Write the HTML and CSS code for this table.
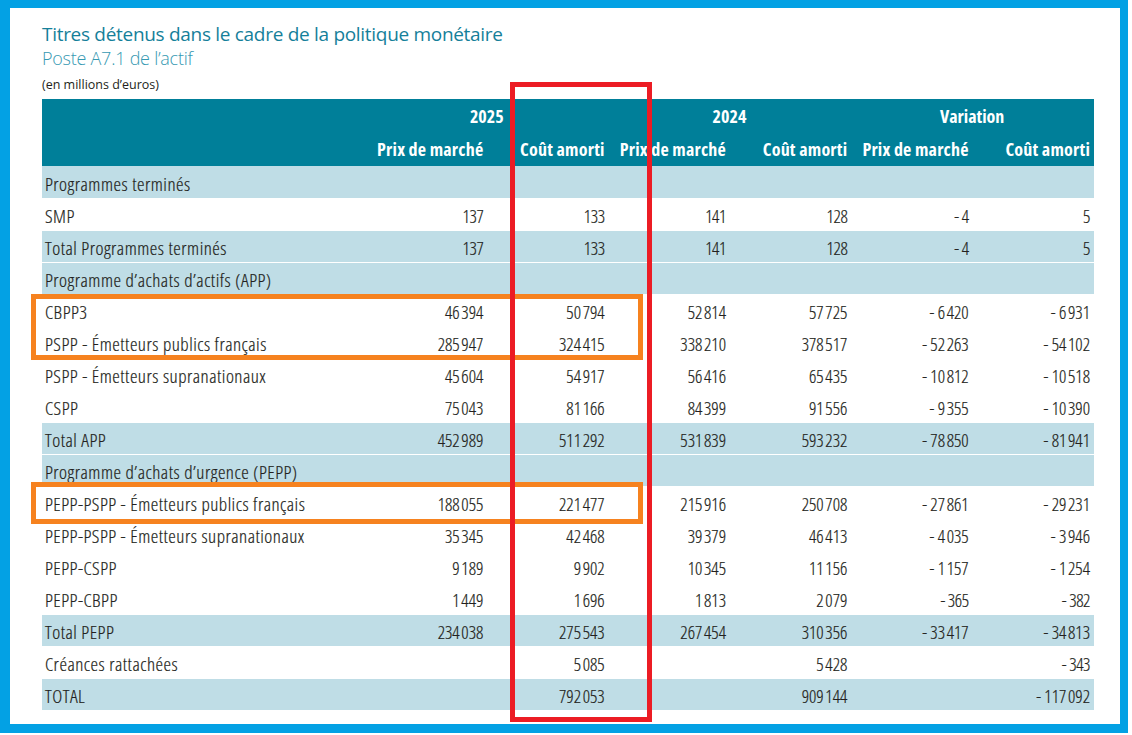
FILE: index.html
```html
<!DOCTYPE html>
<html lang="fr">
<head>
<meta charset="utf-8">
<title>Titres détenus dans le cadre de la politique monétaire</title>
<link rel="stylesheet" href="styles.css">
</head>
<body>
<div class="frame">
  <h1 class="title">Titres détenus dans le cadre de la politique monétaire</h1>
  <h2 class="subtitle">Poste A7.1 de l’actif</h2>
  <p class="unit">(en millions d’euros)</p>
  <table class="data">
    <colgroup>
      <col class="c-label"><col><col><col><col><col><col>
    </colgroup>
    <thead>
      <tr class="years">
        <th></th>
        <th colspan="2">2025</th>
        <th colspan="2">2024</th>
        <th colspan="2">Variation</th>
      </tr>
      <tr class="labels">
        <th></th>
        <th>Prix de marché</th>
        <th>Coût amorti</th>
        <th>Prix de marché</th>
        <th>Coût amorti</th>
        <th>Prix de marché</th>
        <th>Coût amorti</th>
      </tr>
    </thead>
    <tbody>
      <tr class="band"><td colspan="7">Programmes terminés</td></tr>
      <tr><td>SMP</td><td>137</td><td>133</td><td>141</td><td>128</td><td>- 4</td><td>5</td></tr>
      <tr class="band"><td>Total Programmes terminés</td><td>137</td><td>133</td><td>141</td><td>128</td><td>- 4</td><td>5</td></tr>
      <tr class="band"><td colspan="7">Programme d’achats d’actifs (APP)</td></tr>
      <tr><td>CBPP3</td><td>46&#8239;394</td><td>50&#8239;794</td><td>52&#8239;814</td><td>57&#8239;725</td><td>- 6&#8239;420</td><td>- 6&#8239;931</td></tr>
      <tr><td>PSPP - Émetteurs publics français</td><td>285&#8239;947</td><td>324&#8239;415</td><td>338&#8239;210</td><td>378&#8239;517</td><td>- 52&#8239;263</td><td>- 54&#8239;102</td></tr>
      <tr><td>PSPP - Émetteurs supranationaux</td><td>45&#8239;604</td><td>54&#8239;917</td><td>56&#8239;416</td><td>65&#8239;435</td><td>- 10&#8239;812</td><td>- 10&#8239;518</td></tr>
      <tr><td>CSPP</td><td>75&#8239;043</td><td>81&#8239;166</td><td>84&#8239;399</td><td>91&#8239;556</td><td>- 9&#8239;355</td><td>- 10&#8239;390</td></tr>
      <tr class="band"><td>Total APP</td><td>452&#8239;989</td><td>511&#8239;292</td><td>531&#8239;839</td><td>593&#8239;232</td><td>- 78&#8239;850</td><td>- 81&#8239;941</td></tr>
      <tr class="band"><td colspan="7">Programme d’achats d’urgence (PEPP)</td></tr>
      <tr><td>PEPP-PSPP - Émetteurs publics français</td><td>188&#8239;055</td><td>221&#8239;477</td><td>215&#8239;916</td><td>250&#8239;708</td><td>- 27&#8239;861</td><td>- 29&#8239;231</td></tr>
      <tr><td>PEPP-PSPP - Émetteurs supranationaux</td><td>35&#8239;345</td><td>42&#8239;468</td><td>39&#8239;379</td><td>46&#8239;413</td><td>- 4&#8239;035</td><td>- 3&#8239;946</td></tr>
      <tr><td>PEPP-CSPP</td><td>9&#8239;189</td><td>9&#8239;902</td><td>10&#8239;345</td><td>11&#8239;156</td><td>- 1&#8239;157</td><td>- 1&#8239;254</td></tr>
      <tr><td>PEPP-CBPP</td><td>1&#8239;449</td><td>1&#8239;696</td><td>1&#8239;813</td><td>2&#8239;079</td><td>- 365</td><td>- 382</td></tr>
      <tr class="band"><td>Total PEPP</td><td>234&#8239;038</td><td>275&#8239;543</td><td>267&#8239;454</td><td>310&#8239;356</td><td>- 33&#8239;417</td><td>- 34&#8239;813</td></tr>
      <tr><td>Créances rattachées</td><td></td><td>5&#8239;085</td><td></td><td>5&#8239;428</td><td></td><td>- 343</td></tr>
      <tr class="band"><td>TOTAL</td><td></td><td>792&#8239;053</td><td></td><td>909&#8239;144</td><td></td><td>- 117&#8239;092</td></tr>
    </tbody>
  </table>
</div>
<div class="mark mark-orange mark-o1"></div>
<div class="mark mark-orange mark-o2"></div>
<div class="mark mark-red"></div>
</body>
</html>
```
FILE: styles.css
```css
html, body {
  margin: 0;
  padding: 0;
  background: #ffffff;
}

body {
  position: relative;
  width: 1132px;
  height: 735px;
  overflow: hidden;
  font-family: "Open Sans", "Liberation Sans", sans-serif;
  color: #231f20;
}

.frame {
  box-sizing: border-box;
  width: 1128px;
  height: 733px;
  border-style: solid;
  border-color: #03a1e4;
  border-width: 8px 8px 9px 10px;
  padding: 14px 0 0 32px;
  background: #ffffff;
}

.title {
  margin: 0;
  font-size: 19px;
  line-height: 24px;
  font-weight: 400;
  font-stretch: 100%;
  color: #15809a;
  letter-spacing: -0.3px;
}

.subtitle {
  margin: 2px 0 0;
  font-size: 18px;
  line-height: 20px;
  font-weight: 300;
  font-stretch: 100%;
  color: #3699b2;
  letter-spacing: -0.25px;
}

.unit {
  margin: 9px 0 0;
  font-size: 12.5px;
  line-height: 16px;
  font-weight: 400;
  font-stretch: 100%;
  color: #231f20;
}

.data {
  margin-top: 6px;
  width: 1052px;
  table-layout: fixed;
  border-collapse: collapse;
  border-spacing: 0;
}

.c-label {
  width: 324px;
}

.data th {
  background: #007f99;
  color: #ffffff;
  font-weight: 700;
  font-size: 18px;
  font-stretch: 75%;
  padding: 0 4px 0 3px;
  white-space: nowrap;
}

.years th {
  height: 34px;
  line-height: 34px;
  text-align: center;
}

.labels th {
  height: 33px;
  line-height: 33px;
  text-align: right;
  letter-spacing: 0.2px;
}

.data td {
  box-sizing: border-box;
  height: 32px;
  padding: 3px 4px 0 3px;
  line-height: 26px;
  font-size: 18px;
  font-weight: 300;
  font-stretch: 75%;
  text-align: right;
  white-space: nowrap;
  border-top: 1px solid #ffffff;
  border-bottom: 1px solid #ffffff;
  letter-spacing: -0.4px;
  -webkit-text-stroke: 0.2px #231f20;
}

.data td:first-child {
  text-align: left;
  font-size: 19px;
  letter-spacing: 0.5px;
}

.band td {
  background: #bfdde6;
}

tbody tr:first-child td {
  border-top: 0;
  padding-top: 4px;
}

.mark {
  position: absolute;
  box-sizing: border-box;
  pointer-events: none;
}

.mark-orange {
  left: 31px;
  width: 612px;
  border: 5px solid #f6821f;
}

.mark-o1 {
  top: 294px;
  height: 66px;
}

.mark-o2 {
  top: 482px;
  height: 42px;
}

.mark-red {
  left: 510px;
  top: 82px;
  width: 142px;
  height: 640px;
  border: 5px solid #ec1c24;
}
```
